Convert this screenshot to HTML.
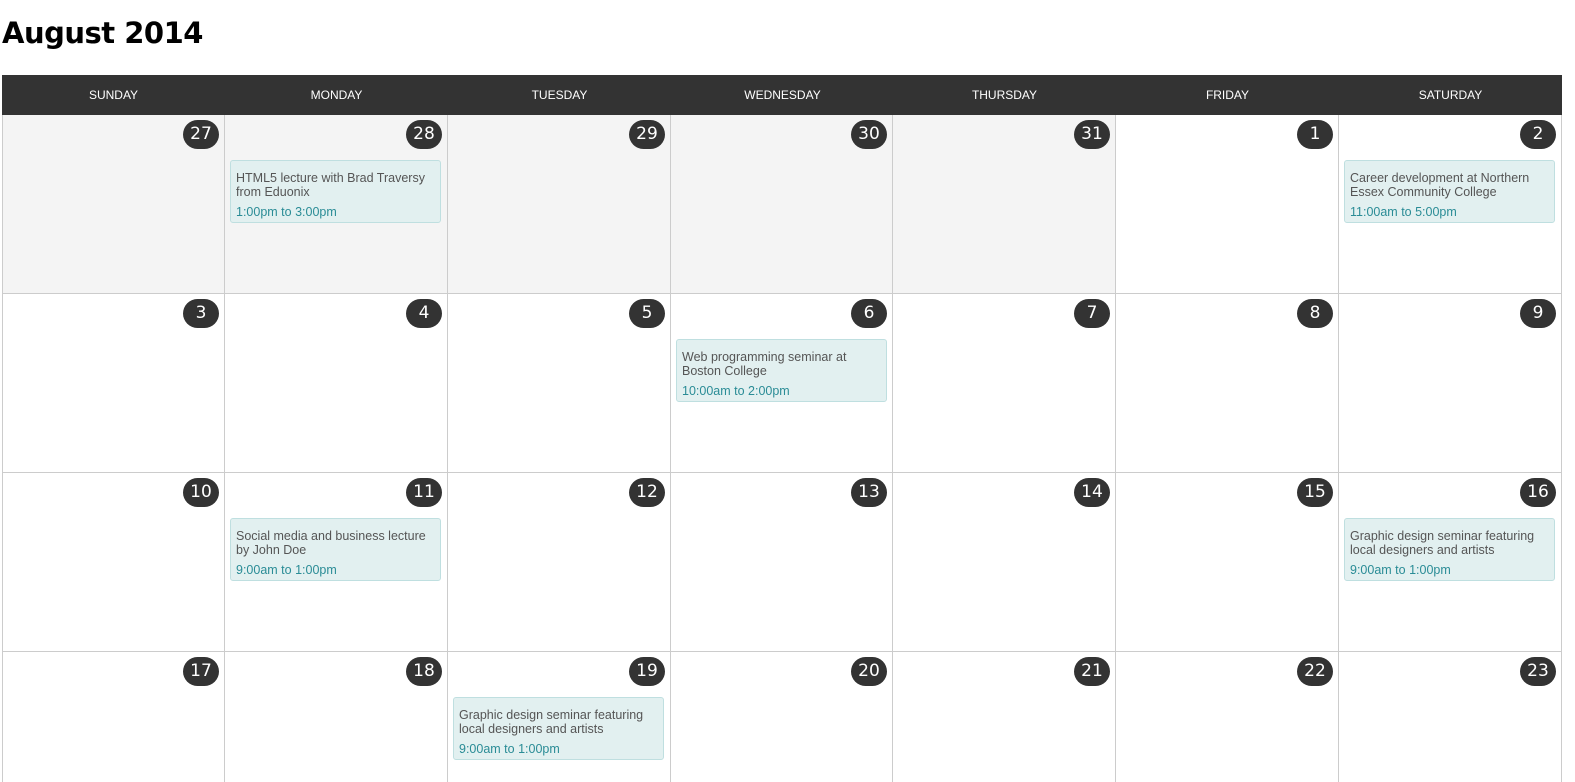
<!DOCTYPE html>
<html><head><style>
html,body{margin:0;background:#fff;font-family:"Liberation Sans",sans-serif;overflow:hidden;width:1575px;height:779px}
h1{position:absolute;left:2px;top:16px;margin:0;font-size:29px;font-weight:bold;color:#000;font-family:"DejaVu Sans","Liberation Sans",sans-serif;letter-spacing:-0.5px}
.hdr{position:absolute;left:2px;top:75px;width:1560px;height:40px;background:#333}
.hdr div{position:absolute;top:0;height:40px;line-height:40px;width:223px;text-align:center;color:#fff;font-size:12px}
.cell{position:absolute;box-sizing:border-box;border-right:1px solid #ccc;border-bottom:1px solid #ccc;height:179px}
.grey{background:#f4f4f4}
.n{position:absolute;right:5px;top:5px;width:36px;height:29px;border-radius:15px;background:#333;color:#fff;font-size:17px;line-height:29px;text-align:center;font-family:"DejaVu Sans",sans-serif}
.ev{position:absolute;left:5px;top:45px;width:211px;height:63px;box-sizing:border-box;background:#e2f0f0;border:1px solid #bfdfe0;border-radius:3px;padding:10px 5px 0;font-size:12.5px;color:#555;line-height:14px}
.ev .t{color:#2a8c96;margin-top:6px}
</style></head><body>
<h1>August 2014</h1>
<div class="hdr">
<div style="left:0">SUNDAY</div><div style="left:223px">MONDAY</div><div style="left:446px">TUESDAY</div><div style="left:669px">WEDNESDAY</div><div style="left:891px">THURSDAY</div><div style="left:1114px">FRIDAY</div><div style="left:1337px">SATURDAY</div>
</div>
<div id="g"></div>
<script>
var nums=[27,28,29,30,31,1,2,3,4,5,6,7,8,9,10,11,12,13,14,15,16,17,18,19,20,21,22,23];
var ev={1:["HTML5 lecture with Brad Traversy from Eduonix","1:00pm to 3:00pm"],6:["Career development at Northern Essex Community College","11:00am to 5:00pm"],10:["Web programming seminar at Boston College","10:00am to 2:00pm"],15:["Social media and business lecture by John Doe","9:00am to 1:00pm"],20:["Graphic design seminar featuring local designers and artists","9:00am to 1:00pm"],23:["Graphic design seminar featuring local designers and artists","9:00am to 1:00pm"]};
var h="";
for(var i=0;i<28;i++){var r=Math.floor(i/7),c=i%7;var x=2+Math.round(c*222.86),x2=2+Math.round((c+1)*222.86),y=115+r*179;
h+='<div class="cell'+(i<5?' grey':'')+'" style="left:'+x+'px;width:'+(x2-x)+'px;top:'+y+'px;'+(r==3?'height:130px;border-bottom:none;':'')+(c==0?'border-left:1px solid #ccc;':'')+'"><div class="n">'+nums[i]+'</div>'+(ev[i]?'<div class="ev">'+ev[i][0]+'<div class="t">'+ev[i][1]+'</div></div>':'')+'</div>';}
document.getElementById("g").innerHTML=h;
</script>
</body></html>
